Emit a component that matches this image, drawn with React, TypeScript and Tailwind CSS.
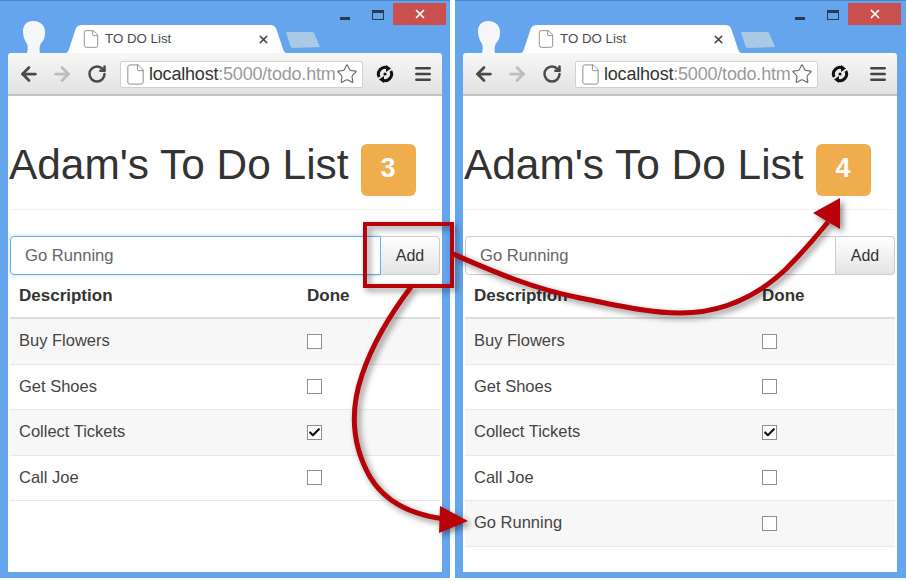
import React from "react";
import { ArrowLeft, ArrowRight, Check, File, Menu, RotateCw, Star, X } from "lucide-react";

type Todo = { name: string; done: boolean };

const Avatar = () => (
  <svg width="24" height="33" viewBox="0 0 24 33" className="shrink-0">
    <path
      d="M5 33 C6 29 6 27 5 24 C2 20 1 15 1 11 C1 5 5 1 11 1 C18 1 23 5 23 12 C23 17 22 20 20 22 C18 24 17 28 18 33 Z"
      fill="#f4f6f8"
    />
  </svg>
);

const Tab = () => (
  <div className="relative h-[28px] w-[222px] shrink-0">
    <svg width="222" height="28" viewBox="0 0 222 28" className="absolute inset-0">
      <path
        d="M0 28 C2 28 3 27 4 24 L10 6 C11 2 13 0 17 0 L205 0 C209 0 211 2 212 6 L218 24 C219 27 220 28 222 28 Z"
        fill="#ffffff"
      />
    </svg>
    <div className="relative flex h-full items-center pl-[16px] pr-[17px]">
      <File size={20} strokeWidth={1.1} className="shrink-0 text-[#8a8a8a]" />
      <span className="ml-[4px] text-[13.3px] text-[#4b4b4b]">TO DO List</span>
      <X size={13} strokeWidth={3} className="ml-auto text-[#444444]" />
    </div>
  </div>
);

const NewTab = () => (
  <svg width="36" height="18" viewBox="0 0 36 18" className="mb-[4px] ml-[-2px] shrink-0">
    <path d="M1 1 L27 1 C29 1 29 2 30 4 L35 16 L8 17 C6 17 6 16 5 14 Z" fill="#a9c9e4" />
  </svg>
);

const CaptionButtons = () => (
  <div className="ml-auto mr-[-4px] flex items-start self-start">
    <div className="mt-[16px] h-[3px] w-[10px] bg-[#2c3b4c]" />
    <div className="ml-[22px] mt-[9px] h-[10px] w-[12px] border border-t-[3px] border-[#2c3b4c]" />
    <div className="ml-[9px] mt-[2px] flex h-[22px] w-[53px] items-center justify-center bg-[#c9504f]">
      <X size={14} strokeWidth={3} className="text-white" />
    </div>
  </div>
);

const SyncIcon = () => (
  <svg width="18" height="18" viewBox="0 0 18 18" className="shrink-0">
    <path d="M3.2 12 A6.5 6.5 0 0 1 12 3.2" fill="none" stroke="#111111" strokeWidth="3" />
    <path d="M14.8 6 A6.5 6.5 0 0 1 6 14.8" fill="none" stroke="#111111" strokeWidth="3" />
    <path d="M10 0 L15 3.5 L10 7 Z" fill="#111111" />
    <path d="M8 18 L3 14.5 L8 11 Z" fill="#111111" />
    <circle cx="9" cy="9" r="1.6" fill="#111111" />
  </svg>
);

const Toolbar = () => (
  <div className="flex h-[43px] items-center rounded-t-[3px] border-b-2 border-[#c4c4c4] bg-gradient-to-b from-[#f7f7f7] to-[#e2e2e2] pl-[10px] pt-[1px]">
    <ArrowLeft size={22} strokeWidth={3} className="shrink-0 text-[#4a4a4a]" />
    <ArrowRight size={22} strokeWidth={3} className="ml-[11px] shrink-0 text-[#bdbdbd]" />
    <RotateCw size={20} strokeWidth={3} className="ml-[14px] shrink-0 text-[#4a4a4a]" />
    <div className="ml-[13px] flex h-[27px] w-[243px] shrink-0 items-center rounded-[2px] border border-[#d0d0d0] bg-white pl-[3px]">
      <File size={23} strokeWidth={1} className="shrink-0 text-[#8a8a8a]" />
      <div className="ml-[2px] w-[187px] overflow-hidden whitespace-nowrap text-[18px] tracking-[-0.2px] text-[#9a9a9a]">
        <span className="text-[#333333]">localhost</span>:5000/todo.html
      </div>
      <Star size={22} strokeWidth={1.2} className="shrink-0 text-[#666666]" />
    </div>
    <div className="ml-[13px]">
      <SyncIcon />
    </div>
    <Menu size={20} strokeWidth={3} className="ml-[19px] shrink-0 text-[#444444]" />
  </div>
);

const CheckBox = ({ checked }: { checked: boolean }) => (
  <div className="flex h-[15px] w-[15px] items-center justify-center border border-[#8f8f8f] bg-white">
    {checked && <Check size={13} strokeWidth={4} className="text-[#111111]" />}
  </div>
);

const TodoPage = ({ todos, focused }: { todos: Todo[]; focused: boolean }) => (
  <div className="flex-1 bg-white pl-[2px] pr-[2px]">
    <div className="flex h-[114px] items-end border-b border-[#f0f0f0] pb-[13px]">
      <div className="ml-[-1px] flex h-[52px] items-center">
        <h1 className="mt-[-10px] whitespace-nowrap text-[42.4px] font-normal leading-none text-[#333333]">
          Adam's To Do List
        </h1>
        <span className="ml-[12px] flex h-[52px] w-[55px] shrink-0 items-center justify-center rounded-[6px] bg-[#f0ad4e] pb-[3px] text-[27px] font-bold text-white">
          {todos.filter((t) => !t.done).length}
        </span>
      </div>
    </div>
    <div className="mt-[26px] flex h-[39px]">
      <div
        className={
          focused
            ? "flex flex-1 items-center rounded-l-[4px] border border-[#66afe9] pl-[14px] pt-[1px] text-[16.6px] text-[#666666] shadow-[0_0_4px_rgba(102,175,233,0.5)]"
            : "flex flex-1 items-center rounded-l-[4px] border border-[#cccccc] pl-[14px] pt-[1px] text-[16.6px] text-[#666666]"
        }
      >
        Go Running
      </div>
      <div className="flex w-[59px] items-center justify-center rounded-r-[4px] border border-l-0 border-[#cccccc] bg-gradient-to-b from-white to-[#e4e4e4] pt-[1px] text-[16px] text-[#333333]">
        Add
      </div>
    </div>
    <div className="flex h-[44px] items-center border-b-2 border-[#dddddd] pl-[9px] text-[17px] font-bold text-[#333333]">
      <div className="w-[288px]">Description</div>
      <div>Done</div>
    </div>
    {todos.map((todo, i) => (
      <div
        key={todo.name}
        className={
          i % 2 === 0
            ? "flex h-[45.5px] items-center border-b border-[#e8e8e8] bg-[#f7f7f7] pl-[9px] text-[16.5px] text-[#444444]"
            : "flex h-[45.5px] items-center border-b border-[#e8e8e8] bg-white pl-[9px] text-[16.5px] text-[#444444]"
        }
      >
        <div className="mt-[-1px] w-[288px]">{todo.name}</div>
        <CheckBox checked={todo.done} />
      </div>
    ))}
  </div>
);

const BrowserWindow = ({ todos, focused, wide }: { todos: Todo[]; focused: boolean; wide: boolean }) => (
  <div
    className={
      wide
        ? "flex h-[578px] w-[451px] shrink-0 flex-col border-t border-[#4c85c4] bg-[#64a5ee] pb-[6px] pl-[8px] pr-[9px]"
        : "flex h-[578px] w-[450px] shrink-0 flex-col border-t border-[#4c85c4] bg-[#64a5ee] pb-[6px] pl-[8px] pr-[8px]"
    }
  >
    <div className="flex h-[52px] items-end pl-[14px]">
      <Avatar />
      <div className="ml-[19px] flex items-end">
        <Tab />
        <NewTab />
      </div>
      <CaptionButtons />
    </div>
    <Toolbar />
    <TodoPage todos={todos} focused={focused} />
  </div>
);

// red callouts drawn over both windows
const Arrows = () => (
  <svg
    width="906"
    height="581"
    viewBox="0 0 906 581"
    className="pointer-events-none absolute left-0 top-0 drop-shadow-[3px_3px_3px_rgba(0,0,0,0.45)]"
  >
    <rect x="365" y="224" width="87" height="62" fill="none" stroke="#b70007" strokeWidth="4" />
    <path
      d="M453 254 C490 270 530 288 580 298 C620 306 650 313 680 313 C720 313 755 298 785 270 C802 253 815 238 828 222"
      fill="none"
      stroke="#b70007"
      strokeWidth="5"
    />
    <path d="M840 198 L813 213 L840 229 Z" fill="#b70007" />
    <path
      d="M411 287 C392 312 372 345 362 375 C350 410 352 445 370 477 C385 502 412 515 445 519"
      fill="none"
      stroke="#b70007"
      strokeWidth="5"
    />
    <path d="M440 506 L468 521 L439 533 Z" fill="#b70007" />
  </svg>
);

const left: Todo[] = [
  { name: "Buy Flowers", done: false },
  { name: "Get Shoes", done: false },
  { name: "Collect Tickets", done: true },
  { name: "Call Joe", done: false },
];

const right: Todo[] = [...left, { name: "Go Running", done: false }];

export default function App() {
  return (
    <div className="relative h-[581px] w-[906px] overflow-hidden bg-white font-['Liberation_Sans',Arial,sans-serif]">
      <div className="flex gap-[5px]">
        <BrowserWindow todos={left} focused wide={false} />
        <BrowserWindow todos={right} focused={false} wide />
      </div>
      <Arrows />
    </div>
  );
}
